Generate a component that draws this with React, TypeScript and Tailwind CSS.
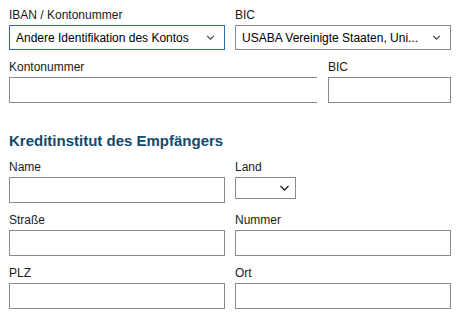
import React from 'react';

function Chevron({ className }: { className?: string }) {
    return (
        <svg viewBox="0 0 10 6" className={className} fill="none" stroke="currentColor" strokeWidth={1.4}>
            <path d="M1 1l4 4 4-4" />
        </svg>
    );
}

function Label({ children }: { children: React.ReactNode }) {
    return <div className="h-[14px] leading-[14px] text-[12px] text-[#1a1a1a] mb-[3px] whitespace-nowrap">{children}</div>;
}

function TextInput({ className = '' }: { className?: string }) {
    return <input type="text" className={`block h-[26px] border border-[#8a8a8a] bg-white outline-none px-[6px] text-[12px] ${className}`} />;
}

function FakeSelect({ value, active, className = '' }: { value: string; active?: boolean; className?: string }) {
    return (
        <div
            className={`flex items-center justify-between h-[25px] bg-white pl-[6px] pr-[9px] text-[12px] text-black border ${active ? 'border-[#2a6db3]' : 'border-[#8a8a8a]'} ${className}`}
        >
            <span className="whitespace-nowrap overflow-hidden">{value}</span>
            <Chevron className="w-[9px] h-[5px] text-[#444] shrink-0" />
        </div>
    );
}

export default function App() {
    return (
        <div className="w-[458px] h-[319px] bg-white pl-[9px] pt-[8px] overflow-hidden" style={{ fontFamily: '"Liberation Sans", Arial, sans-serif' }}>
            {/* Konto */}
            <div className="grid grid-cols-[216px_216px] gap-x-[10px]">
                <div>
                    <Label>IBAN / Kontonummer</Label>
                    <FakeSelect value="Andere Identifikation des Kontos" active />
                </div>
                <div>
                    <Label>BIC</Label>
                    <FakeSelect value="USABA Vereinigte Staaten, Uni..." />
                </div>
            </div>

            <div className="flex gap-x-[11px] mt-[10px]">
                <div className="w-[308px]">
                    <Label>Kontonummer</Label>
                    <TextInput className="w-[308px] border-r-0" />
                </div>
                <div className="w-[123px]">
                    <Label>BIC</Label>
                    <TextInput className="w-[123px]" />
                </div>
            </div>

            {/* Kreditinstitut */}
            <h2 className="mt-[29px] h-[18px] leading-[18px] text-[15px] font-bold text-[#0f4a6e] whitespace-nowrap">
                Kreditinstitut des Empfängers
            </h2>

            <div className="grid grid-cols-[216px_216px] gap-x-[10px] gap-y-[10px] mt-[10px]">
                <div>
                    <Label>Name</Label>
                    <TextInput className="w-[216px]" />
                </div>
                <div>
                    <Label>Land</Label>
                    <div className="mt-[2px] flex items-center justify-end w-[61px] h-[22px] border border-[#8a8a8a] bg-white pr-[5px]">
                        <Chevron className="w-[11px] h-[6px] text-[#222]" />
                    </div>
                </div>
                <div>
                    <Label>Straße</Label>
                    <TextInput className="w-[216px]" />
                </div>
                <div>
                    <Label>Nummer</Label>
                    <TextInput className="w-[216px]" />
                </div>
                <div>
                    <Label>PLZ</Label>
                    <TextInput className="w-[216px]" />
                </div>
                <div>
                    <Label>Ort</Label>
                    <TextInput className="w-[216px]" />
                </div>
            </div>
        </div>
    );
}
